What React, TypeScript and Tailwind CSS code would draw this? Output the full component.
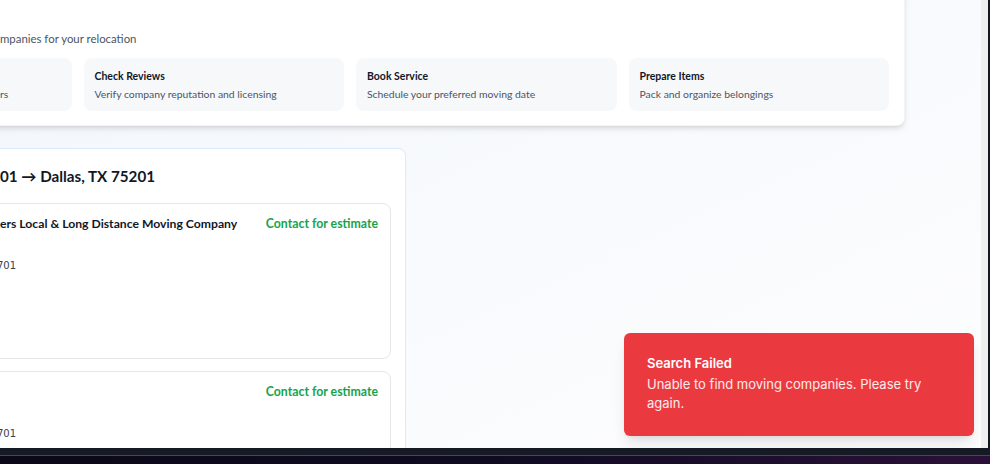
const steps = [
  { title: 'Get Quotes', desc: 'Compare quotes from top movers' },
  { title: 'Check Reviews', desc: 'Verify company reputation and licensing' },
  { title: 'Book Service', desc: 'Schedule your preferred moving date' },
  { title: 'Prepare Items', desc: 'Pack and organize belongings' },
]

// left part of a line sits off screen, the rest starts at the viewport edge
function Clipped({ hidden, shown, width, className }: { hidden: string; shown: string; width: string; className?: string }) {
  return (
    <div className={`flex whitespace-nowrap ${className ?? ''}`}>
      <span className={`${width} shrink-0 flex justify-end overflow-visible`}>
        <span className="shrink-0">{hidden}</span>
      </span>
      <span>{shown}</span>
    </div>
  )
}

function CompanyCard({ name, hiddenName, shownName }: { name?: string; hiddenName?: string; shownName?: string }) {
  return (
    <div className="h-[156px] rounded-lg border border-gray-200 bg-white px-3 pt-[10px]">
      <div className="flex items-start justify-between">
        {shownName ? (
          <Clipped
            hidden={hiddenName ?? ''}
            shown={shownName}
            width="w-[177px]"
            className="text-[12.2px] leading-5 font-bold text-gray-900"
          />
        ) : (
          <div className="text-[12.2px] leading-5 font-bold text-gray-900">{name}</div>
        )}
        <span className="text-[12.3px] leading-5 font-bold text-[#16a34a]">Contact for estimate</span>
      </div>
      <div className="mt-[4px] h-[20px] text-[11px] text-gray-500">★ 4.8</div>
      <Clipped
        hidden="412 Congress Ave, Austin, TX 78"
        shown="701"
        width="w-[174px]"
        className="text-[10px] leading-4 text-gray-700 font-['DejaVu_Sans',sans-serif]"
      />
    </div>
  )
}

export default function App() {
  return (
    <div className="flex h-[464px] w-[990px] flex-col overflow-hidden bg-[#0d0a1f] font-['Lato',sans-serif]">
      <div className="flex h-[448px] shrink-0">
        <main className="relative h-full w-[981px] overflow-hidden bg-gradient-to-br from-[#f2f6fb] via-[#f8fafd] to-[#fdfdfe]">
          <div className="-mt-[20px] -ml-[205px] w-[1110px]">
            <section className="rounded-lg border border-gray-100 bg-white px-[15px] pt-[48px] pb-[14px] shadow-md">
              <Clipped
                hidden="Find and compare trusted co"
                shown="mpanies for your relocation"
                width="w-[189px]"
                className="text-[11.4px] leading-5 text-gray-600"
              />
              <div className="mt-[9px] grid grid-cols-4 gap-3">
                {steps.map((s, i) => (
                  <div key={s.title} className="rounded-lg bg-[#f7f8fa] px-[11px] pt-[10px] pb-[9px]">
                    <div className="text-[10.5px] leading-4 font-bold text-gray-900">{s.title}</div>
                    {i === 0 ? (
                      <Clipped
                        hidden="Compare quotes from top move"
                        shown="rs"
                        width="w-[178px]"
                        className="mt-[2px] text-[10.4px] leading-4 text-gray-600"
                      />
                    ) : (
                      <div className="mt-[2px] text-[10.4px] leading-4 text-gray-600">{s.desc}</div>
                    )}
                  </div>
                ))}
              </div>
            </section>

            <section className="mt-[22px] w-[611px] rounded-lg border border-blue-100 bg-white px-[14px] pt-[15px]">
              <Clipped
                hidden="Moving from Austin, TX 787"
                shown="01 → Dallas, TX 75201"
                width="w-[190px]"
                className="text-[15.2px] leading-6 font-bold text-gray-900"
              />
              <div className="mt-[15px] flex flex-col gap-3">
                <CompanyCard hiddenName="Austin Mov" shownName="ers Local & Long Distance Moving Company" />
                <CompanyCard name="Tex Move" />
              </div>
            </section>
          </div>

          <div className="absolute right-[7px] bottom-[12px] w-[350px] rounded-md bg-[#ea3a40] px-[23px] pt-[21px] pb-[23px] font-['Inter',sans-serif] text-white shadow-lg">
            <div className="text-[13px] leading-[18px] font-semibold">Search Failed</div>
            <div className="mt-[3px] text-[13px] leading-[19px] text-white/90">
              Unable to find moving companies. Please try again.
            </div>
          </div>
        </main>
        <div className="w-[7px] bg-[#efefef]" />
        <div className="w-[2px] bg-[#131722]" />
      </div>
      <div className="h-[7px] bg-[#151a24]" />
      <div className="h-px bg-[#464953]" />
      <div className="flex-1 bg-gradient-to-r from-[#0b0818] via-[#0f0a22] to-[#2a1038]" />
    </div>
  )
}
